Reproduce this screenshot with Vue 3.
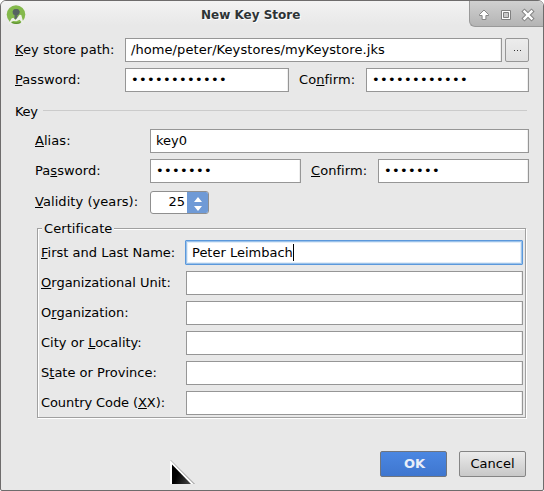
<script setup>
import { ref } from 'vue'

const path = ref('/home/peter/Keystores/myKeystore.jks')
const alias = ref('key0')
const validity = ref(25)
const certificate = ref([
  { pre: '', key: 'F', post: 'irst and Last Name:', value: 'Peter Leimbach', focused: true },
  { pre: '', key: 'O', post: 'rganizational Unit:', value: '' },
  { pre: 'O', key: 'r', post: 'ganization:', value: '' },
  { pre: 'City or ', key: 'L', post: 'ocality:', value: '' },
  { pre: 'S', key: 't', post: 'ate or Province:', value: '' },
  { pre: 'Country Code (', key: 'X', post: 'X):', value: '', tight: true },
])
const dots = (n) => '•'.repeat(n)
</script>

<template>
  <div class="window">
    <header class="titlebar">
      <svg class="app-icon" width="20" height="22" viewBox="0 0 20 22">
        <circle cx="10" cy="9.6" r="9.3" fill="#84b94c" />
        <path d="M8.500 14V9.500H7L6.500 6.600 8 4.200h4l1.800 2.400-.8 2.900h-1.500V14z" fill="#5d6967" />
        <circle cx="10.200" cy="7" r="3.100" fill="#566361" />
        <path d="M6 17.300q4.500 1.800 8.500 0" fill="none" stroke="#5f9430" stroke-width="1.400" />
        <path d="M2 20 5.500 13.500l1.800-.8 2.200 2.300 4.200-5.200 1.600.3 2.700 9.900-4.400-5.300-3.200 1.600-3-.2-2.400 1z" fill="#eef1e9" />
      </svg>
      <h1 class="title">New Key Store</h1>
      <div class="controls">
        <svg width="72" height="26" viewBox="0 0 72 26">
          <path d="M14 9 18.500 13.500V14.500H15.900V18.500H12.100V14.500H9.500V13.500Z" fill="#fff" stroke="#858585" stroke-width="1" stroke-linejoin="round" />
          <path d="M31.500 9.500h9v9h-9z" fill="#fff" stroke="#808080" />
          <path d="M33.500 11.500h5v5h-5z" fill="#c9c9c9" stroke="#808080" />
          <path d="M54.500 10.500 61.500 17.500M61.500 10.500 54.500 17.500" stroke="#858585" stroke-width="4.400" stroke-linecap="square" />
          <path d="M54.500 10.500 61.500 17.500M61.500 10.500 54.500 17.500" stroke="#fff" stroke-width="2.400" stroke-linecap="square" />
        </svg>
      </div>
    </header>

    <main class="content">
      <div class="row store-path">
        <label class="label wide"><u>K</u>ey store path:</label>
        <div class="field grow path">{{ path }}</div>
        <button class="browse"><i></i><i></i><i></i></button>
      </div>
      <div class="row store-password">
        <label class="label wide"><u>P</u>assword:</label>
        <div class="field secret pw">{{ dots(12) }}</div>
        <label class="label confirm">Co<u>n</u>firm:</label>
        <div class="field secret grow">{{ dots(12) }}</div>
      </div>

      <div class="separator"><span>Key</span><hr /></div>

      <section class="key">
        <div class="row">
          <label class="label"><u>A</u>lias:</label>
          <div class="field grow">{{ alias }}</div>
        </div>
        <div class="row key-password">
          <label class="label">Pa<u>s</u>sword:</label>
          <div class="field secret pw">{{ dots(7) }}</div>
          <label class="label confirm"><u>C</u>onfirm:</label>
          <div class="field secret grow">{{ dots(7) }}</div>
        </div>
        <div class="row validity">
          <label class="label"><u>V</u>alidity (years):</label>
          <div class="spinner">
            <span>{{ validity }}</span>
            <div class="steps">
              <svg width="8" height="14" viewBox="0 0 8 14">
                <path d="M4 0 8 5H0zM4 14 8 9H0z" fill="#fff" />
              </svg>
            </div>
          </div>
        </div>
      </section>

      <section class="certificate">
        <span class="legend">Certificate</span>
        <div v-for="item in certificate" :key="item.key + item.post" class="row">
          <label class="label" :class="{ tight: item.tight }">{{ item.pre }}<u>{{ item.key }}</u>{{ item.post }}</label>
          <div class="field grow" :class="{ focused: item.focused }">
            <span>{{ item.value }}</span><b v-if="item.focused" class="caret"></b>
          </div>
        </div>
      </section>

      <footer class="actions">
        <button class="btn primary">OK</button>
        <button class="btn">Cancel</button>
      </footer>
    </main>

    <svg class="pointer" width="26" height="25" viewBox="0 0 26 25">
      <path d="M2 2 25 24H21z" fill="#b5b5b5" />
      <path d="M0 0 23.500 24H0z" fill="#fff" />
      <path d="M.5 0 24.500 24" stroke="#aaa" stroke-width=".8" />
      <path d="M2 4.500 21 24H2z" fill="url(#pointer-fill)" />
      <defs>
        <linearGradient id="pointer-fill" x1="0" y1="0.600" x2="1" y2="1">
          <stop offset="0.200" stop-color="#000" />
          <stop offset="1" stop-color="#4a4a4a" />
        </linearGradient>
      </defs>
    </svg>
  </div>
</template>

<style>
body {
  margin: 0;
  background: #fff;
}
</style>

<style scoped>
.window {
  position: relative;
  box-sizing: border-box;
  width: 544px;
  height: 491px;
  border: 1px solid #6e6c6c;
  border-radius: 6px 6px 2px 2px;
  background: #e8e8e8;
  color: #000;
  font: 13px/18px "DejaVu Sans", sans-serif;
  overflow: hidden;
}
.titlebar {
  display: flex;
  height: 28px;
  background: linear-gradient(#f3f3f3, #e8e8e8 24px);
}
.app-icon {
  margin: 4px 0 0 5px;
}
.title {
  margin: 5px 0 0 175px;
  font-size: 12px;
  line-height: 18px;
  color: #2e3436;
  text-shadow: 1px 1px 0 #fff;
}
.controls {
  width: 73px;
  height: 25px;
  margin-left: auto;
  border: solid #999;
  border-width: 0 0 1px 1px;
  border-radius: 0 0 0 6px;
  background: linear-gradient(#d0d0d0, #b4b4b4);
}
.controls svg {
  display: block;
}
.content {
  padding: 9px 14px 0;
}
.row {
  display: flex;
  height: 24px;
}
.label {
  flex: none;
  box-sizing: border-box;
  padding-top: 3px;
  letter-spacing: 0.060px;
  white-space: pre;
}
.label.wide {
  width: 110px;
}
.label u {
  text-underline-offset: 1px;
  text-decoration-thickness: 1px;
  text-decoration-skip-ink: none;
}
.field {
  box-sizing: border-box;
  height: 24px;
  padding: 2px 5px;
  border: 1px solid #969696;
  background: #fff;
  box-shadow: inset -1px 0 #eee;
  white-space: pre;
}
.field.path {
  letter-spacing: 0.075px;
}
.grow {
  flex: 1;
}
.secret {
  letter-spacing: 0.330px;
}
.browse {
  display: flex;
  justify-content: center;
  align-items: center;
  gap: 2px;
  box-sizing: border-box;
  width: 24px;
  height: 24px;
  margin-left: 3px;
  padding: 0;
  border: 1px solid #969696;
  border-radius: 2px;
  background: linear-gradient(#ececec, #e0e0e0);
}
.browse i {
  width: 1px;
  height: 1px;
  background: #333;
}
.store-password {
  margin-top: 6px;
}
.store-password .pw {
  width: 164px;
}
.store-password .confirm {
  width: 77px;
  padding-left: 10px;
}
.separator {
  display: flex;
  height: 18px;
  margin-top: 11px;
}
.separator hr {
  flex: 1;
  height: 1px;
  margin: 7px 2px 0 6px;
  border: 0;
  background: #cbcbcb;
}
.separator span {
  width: 22px;
  letter-spacing: -0.300px;
}
.key {
  margin: 8px 0 0 20px;
}
.key .label {
  width: 115px;
}
.key-password {
  margin-top: 6px;
}
.key-password .pw {
  width: 151px;
}
.key-password .confirm {
  width: 77px;
  padding-left: 10px;
}
.validity {
  margin-top: 7px;
}
.spinner {
  display: flex;
  box-sizing: border-box;
  width: 59px;
  height: 23px;
  margin-top: 1px;
  border: 1px solid #8f8f8f;
  border-radius: 3px;
  background: #fff;
  overflow: hidden;
}
.spinner span {
  flex: 1;
  padding: 1px 2px 0 0;
  text-align: right;
}
.steps {
  display: flex;
  align-items: center;
  justify-content: center;
  width: 21px;
  padding-top: 2px;
  background: #6f9ad6;
}
.certificate {
  position: relative;
  display: grid;
  gap: 6px;
  box-sizing: border-box;
  height: 190px;
  margin: 14px 3px 0 22px;
  padding: 12px 2px 0 3px;
  border: 1px solid #a0a0a0;
  box-shadow: 1px 1px #fff, inset 1px 1px #fff;
  align-content: start;
}
.certificate .label {
  width: 145px;
  letter-spacing: 0.010px;
}
.certificate .label.tight {
  letter-spacing: -0.090px;
}
.legend {
  position: absolute;
  left: 4px;
  top: -9px;
  padding: 0 2px;
  background: #e8e8e8;
  letter-spacing: 0.080px;
}
.field.focused {
  display: flex;
  height: 25px;
  margin: -1px 0 0 -1px;
  padding: 3px 4px 1px 6px;
  border-color: #5b98db;
  box-shadow: inset 0 0 0 1px #9bc2ea, inset 0 0 0 2px #e2edf8;
  border-radius: 1px;
}
.caret {
  width: 1px;
  height: 17px;
  background: #000;
}
.actions {
  display: flex;
  justify-content: flex-end;
  gap: 12px;
  margin: 33px 3px 0 0;
}
.btn {
  box-sizing: border-box;
  width: 67px;
  height: 26px;
  padding: 0 0 1px;
  border: 1px solid #858585;
  border-radius: 2px;
  background: linear-gradient(#ebebeb, #c8c8c8);
  color: #000;
  font: 13px/18px "DejaVu Sans", sans-serif;
}
.btn.primary {
  padding-left: 2px;
  border-color: #70757d;
  background: linear-gradient(#4b87e2, #3f76cf);
  color: #e9eef8;
  font-weight: bold;
}
.pointer {
  position: absolute;
  left: 169px;
  top: 459px;
}
</style>
